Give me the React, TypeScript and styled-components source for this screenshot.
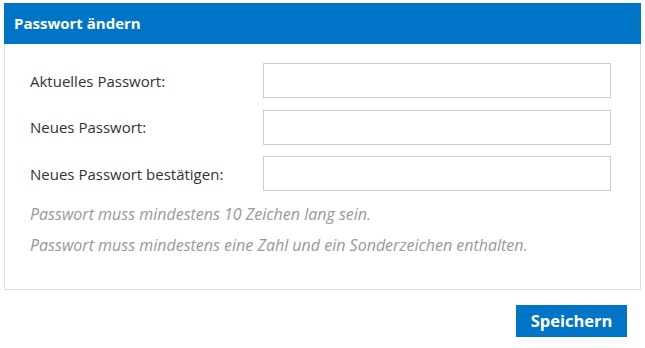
import React from "react";
import styled, { createGlobalStyle } from "styled-components";

const GlobalStyle = createGlobalStyle`
  body {
    margin: 0;
    background: #ffffff;
    font-family: "Open Sans", "Liberation Sans", sans-serif;
  }
`;

const fields = [
  { id: "current", label: "Aktuelles Passwort:" },
  { id: "new", label: "Neues Passwort:" },
  { id: "confirm", label: "Neues Passwort bestätigen:" },
];

const hints = [
  "Passwort muss mindestens 10 Zeichen lang sein.",
  "Passwort muss mindestens eine Zahl und ein Sonderzeichen enthalten.",
];

const App: React.FC = () => {
  return (
    <Page>
      <GlobalStyle />
      <Panel>
        <Header>Passwort ändern</Header>
        <Body>
          {fields.map((f) => (
            <Row key={f.id}>
              <Label htmlFor={f.id}>{f.label}</Label>
              <Input id={f.id} type="password" />
            </Row>
          ))}
          <Hints>
            {hints.map((h, i) => (
              <Hint key={i}>{h}</Hint>
            ))}
          </Hints>
        </Body>
      </Panel>
      <Actions>
        <SaveButton type="button">Speichern</SaveButton>
      </Actions>
    </Page>
  );
};

export default App;

const Page = styled.div`
  padding: 3px 4px 0 4px;
  width: 637px;
`;

const Panel = styled.div`
  border: 1px solid #dddddd;
  border-top: none;
`;

const Header = styled.div`
  background-color: #0074c6;
  color: #ffffff;
  font-weight: bold;
  font-size: 15px;
  height: 41px;
  line-height: 41px;
  padding: 0 10px;
  margin: 0 -1px;
`;

const Body = styled.div`
  padding: 19px 29px 33px 25px;
  display: flex;
  flex-direction: column;
`;

const Row = styled.div`
  display: grid;
  grid-template-columns: 233px 1fr;
  align-items: center;
  margin-bottom: 11.5px;
`;

const Label = styled.label`
  font-size: 15px;
  color: #333333;
`;

const Input = styled.input`
  box-sizing: border-box;
  height: 35px;
  width: 348px;
  border: 1px solid #cccccc;
  background: #ffffff;
  outline: none;
  padding: 0 8px;
`;

const Hints = styled.div`
  display: flex;
  flex-direction: column;
  gap: 9px;
`;

const Hint = styled.div`
  font-size: 16px;
  font-style: italic;
  color: #999999;
  line-height: 22px;
`;

const Actions = styled.div`
  display: flex;
  justify-content: flex-end;
  padding: 15px 14px 0 0;
`;

const SaveButton = styled.button`
  background-color: #0074c6;
  color: #ffffff;
  border: none;
  font-family: "Open Sans", "Liberation Sans", sans-serif;
  font-weight: bold;
  font-size: 16.5px;
  width: 111px;
  height: 32px;
  cursor: pointer;
`;
